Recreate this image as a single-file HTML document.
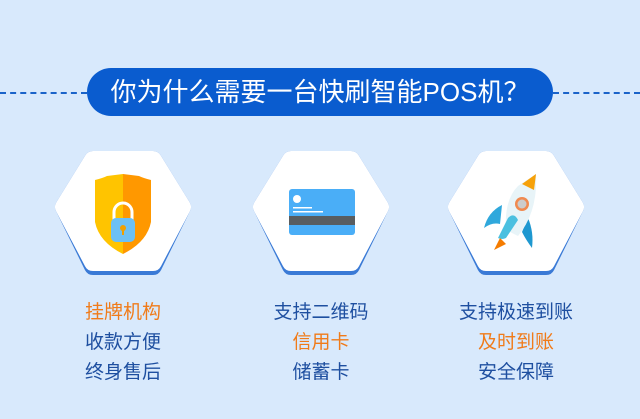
<!DOCTYPE html>
<html><head><meta charset="utf-8"><style>
body{margin:0;width:640px;height:419px;background:#d8e9fc;position:relative;overflow:hidden;font-family:"Liberation Sans","Noto Sans CJK SC",sans-serif}
.dash{position:absolute;top:92px;height:0;border-top:2px dashed #1a63c9}
.pill{position:absolute;left:87px;top:68px;width:466px;height:48px;border-radius:24px;background:#0a5ccf;color:#fff;font-size:26px;line-height:48px;text-align:center}
.hex{position:absolute;top:150px;width:136px;height:127px}
.txt{position:absolute;top:298px;width:200px;text-align:center;font-size:19px;line-height:30px;color:#1e4fa0}
.o{color:#f07b1a}
</style></head><body>
<div class="dash" style="left:0;width:87px"></div>
<div class="dash" style="left:553px;width:87px"></div>
<div class="pill">你为什么需要一台快刷智能POS机？</div>

<svg class="hex" style="left:55px" viewBox="0 0 136 127">
<path d="M38 10 H98 L127 57 L98 116 H38 L9 57 Z" fill="#3a7ad6" stroke="#3a7ad6" stroke-width="18" stroke-linejoin="round"/>
<path d="M38 10 H98 L127 57 L98 112 H38 L9 57 Z" fill="#fff" stroke="#fff" stroke-width="18" stroke-linejoin="round"/>
<path d="M40 30 Q48 28 52 26 L68 24 V104 Q44 92 40 72 Z" fill="#ffc400"/>
<path d="M68 24 L84 26 Q88 28 96 30 V72 Q92 92 68 104 Z" fill="#ff9800"/>
<path d="M59 70 V62 A9 9 0 0 1 77 62 V70" fill="none" stroke="#fff" stroke-width="3"/>
<rect x="56" y="68" width="24" height="24" rx="5" fill="#6cc0f5"/>
<circle cx="68" cy="78" r="3" fill="#f0a000"/><rect x="67" y="79" width="2" height="6" fill="#f0a000"/>
</svg>

<svg class="hex" style="left:253px" viewBox="0 0 136 127">
<path d="M38 10 H98 L127 57 L98 116 H38 L9 57 Z" fill="#3a7ad6" stroke="#3a7ad6" stroke-width="18" stroke-linejoin="round"/>
<path d="M38 10 H98 L127 57 L98 112 H38 L9 57 Z" fill="#fff" stroke="#fff" stroke-width="18" stroke-linejoin="round"/>
<rect x="36" y="39" width="66" height="46" rx="3" fill="#4aaef7"/>
<rect x="36" y="66" width="66" height="9" fill="#585d60"/>
<circle cx="44" cy="49" r="4" fill="#fff"/>
<rect x="40" y="57" width="19" height="1.5" fill="#fff"/><rect x="40" y="61" width="30" height="1.5" fill="#fff"/>
</svg>

<svg class="hex" style="left:448px" viewBox="0 0 136 127">
<path d="M38 10 H98 L127 57 L98 116 H38 L9 57 Z" fill="#3a7ad6" stroke="#3a7ad6" stroke-width="18" stroke-linejoin="round"/>
<path d="M38 10 H98 L127 57 L98 112 H38 L9 57 Z" fill="#fff" stroke="#fff" stroke-width="18" stroke-linejoin="round"/>
<path d="M54 55 Q40 62 36 78 Q44 72 52 74 Z" fill="#2fa8dc"/>
<path d="M80 68 Q86 82 84 98 Q78 90 74 82 Z" fill="#1e98d0"/>
<path d="M88 24 L70 36 Q56 50 58 80 L70 86 Q90 62 88 24 Z" fill="#e8f4f8"/>
<path d="M88 24 L74 34 L86 40 Z" fill="#f6a10a"/>
<circle cx="74" cy="54" r="7" fill="#f08a50"/><circle cx="74" cy="54" r="4.5" fill="#ccc"/>
<path d="M70 70 Q66 62 60 68 L50 88 Q54 90 58 88 Z" fill="#4bc0e0"/>
<path d="M52 88 L46 100 L58 94 Z" fill="#f57c00"/>
</svg>

<div class="txt" style="left:23px"><span class="o">挂牌机构</span><br>收款方便<br>终身售后</div>
<div class="txt" style="left:221px">支持二维码<br><span class="o">信用卡</span><br>储蓄卡</div>
<div class="txt" style="left:416px">支持极速到账<br><span class="o">及时到账</span><br>安全保障</div>
</body></html>
